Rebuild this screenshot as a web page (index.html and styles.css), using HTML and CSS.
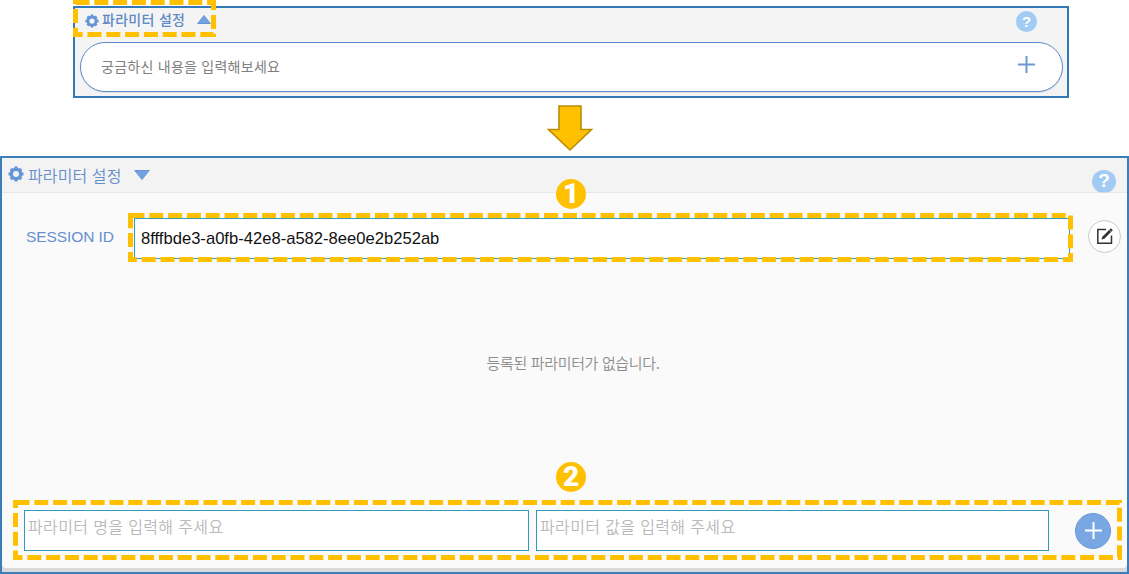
FILE: index.html
```html
<!DOCTYPE html>
<html lang="ko">
<head>
<meta charset="utf-8">
<title>파라미터 설정</title>
<link rel="stylesheet" href="styles.css">
</head>
<body>
<main class="page">
  <section class="compact">
    <header class="compact-head">
      <svg class="gear gear-small" viewBox="-8 -8 16 16"><circle r="4.6"/><path d="M0-7.5V-4M0 7.5V4M-7.5 0H-4M7.5 0H4M-5.2-5.2L-3-3M5.2 5.2L3 3M-5.2 5.2L-3 3M5.2-5.2L3-3"/></svg>
      <span class="compact-title">파라미터 설정</span>
      <svg class="triangle-up" viewBox="0 0 14 9"><path d="M7 .5L13.3 8.5H.7Z"/></svg>
      <span class="help help-small">?</span>
    </header>
    <div class="prompt">
      <span class="prompt-text">궁금하신 내용을 입력해보세요</span>
      <svg class="prompt-plus" viewBox="0 0 17 17"><path d="M8.5 0V17M0 8.5H17"/></svg>
    </div>
  </section>

  <svg class="arrow" viewBox="0 0 48 48"><path d="M13 2H35V25.500H45.500L24 46L2.500 25.500H13Z"/></svg>

  <section class="panel">
    <header class="panel-head">
      <svg class="gear" viewBox="-8 -8 16 16"><circle r="4.600"/><path d="M0-7.5V-4M0 7.5V4M-7.5 0H-4M7.5 0H4M-5.2-5.2L-3-3M5.2 5.2L3 3M-5.2 5.2L-3 3M5.2-5.2L3-3"/></svg>
      <span class="panel-title">파라미터 설정</span>
      <svg class="triangle-down" viewBox="0 0 16 10"><path d="M.8.5H15.200L8 9.500Z"/></svg>
      <span class="help">?</span>
    </header>
    <div class="panel-body">
      <div class="session">
        <span class="session-label">SESSION ID</span>
        <div class="session-value"><span class="session-text">8fffbde3-a0fb-42e8-a582-8ee0e2b252ab</span></div>
        <span class="edit"><svg viewBox="0 0 18 18"><path class="edit-box" d="M10 2.500H1.800V16.200H15.500V8.500"/><path class="edit-pen" d="M5.500 12.500L6.300 9.700L14.800 1.200L16.800 3.200L8.300 11.700Z"/><path class="edit-cut" d="M13 2.500L15.500 5"/></svg></span>
      </div>
      <div class="empty"><span class="empty-text">등록된 파라미터가 없습니다.</span></div>
      <div class="entry">
        <div class="field field-name"><span class="field-text">파라미터 명을 입력해 주세요</span></div>
        <div class="field field-value"><span class="field-text">파라미터 값을 입력해 주세요</span></div>
        <span class="add"><svg viewBox="0 0 17 17"><path d="M8.500 0V17M0 8.500H17"/></svg></span>
      </div>
    </div>
  </section>

  <svg class="callouts" viewBox="0 0 1129 574">
    <rect x="75.5" y="2.5" width="138" height="32"/>
    <rect x="130.5" y="215.5" width="940" height="44"/>
    <rect x="15.5" y="502.5" width="1104" height="55"/>
  </svg>
  <span class="marker marker-one">1</span>
  <span class="marker marker-two">2</span>
</main>
</body>
</html>
```

FILE: styles.css
```css
* { box-sizing: border-box; }
body { margin: 0; background: #fff; font-family: "Liberation Sans", "Noto Sans CJK KR", sans-serif; }
svg { display: block; flex: none; }
span { white-space: nowrap; }
.page { position: relative; width: 1129px; height: 574px; padding-top: 6px; overflow: hidden; display: flex; flex-direction: column; }

.compact { width: 996px; height: 92px; margin-left: 73px; border: 2px solid #3479b7; background: #f4f4f4; padding: 0 4px 0 5px; }
.compact-head { display: flex; align-items: center; height: 34px; padding: 0 25px 8px 4px; }
.gear { width: 16px; height: 16px; fill: none; stroke: #6495d6; stroke-width: 3.2; }
.gear-small { width: 14px; height: 14px; margin: -1px 0 0 1px; }
.compact-title { width: 84px; margin: -4px 0 0 3px; font: 500 14px/20px "Noto Sans CJK KR", sans-serif; letter-spacing: .3px; color: #6089c6; }
.triangle-up { width: 14px; height: 9px; margin: -3px 0 0 11px; fill: #75a3e2; stroke: #6495d6; stroke-width: 1; }
.help { display: flex; align-items: center; justify-content: center; margin-left: auto; width: 24px; height: 24px; border-radius: 50%; background: #a1cbf3; color: #fff; font: bold 19px/24px "Liberation Sans", sans-serif; }
.help-small { width: 21px; height: 21px; margin-right: 1px; font-size: 15px; line-height: 21px; }
.prompt { display: flex; align-items: center; justify-content: space-between; height: 50px; border: 1.5px solid #5a8cc9; border-radius: 25px; background: #fff; padding: 0 27px 0 20px; box-shadow: 0 1px 1px #ddd; }
.prompt-text { margin-top: -2px; font: 400 14px/20px "Noto Sans CJK KR", sans-serif; color: #808080; letter-spacing: .26px; }
.prompt-plus { width: 17px; height: 17px; margin-top: -6px; stroke: #6c9ad3; stroke-width: 2; }

.arrow { width: 48px; height: 48px; margin: 6px 0 0 546px; fill: #ffc000; stroke: #bc8c00; stroke-width: 1.6; }

.panel { width: 1129px; height: 418px; margin-top: 4px; border: 2px solid #3b7eb9; background: #d9d9d9; padding-bottom: 4px; }
.panel-head { display: flex; align-items: center; height: 35px; background: #f3f3f3; border-bottom: 1px solid #e8e8e8; padding: 0 11px 0 6px; }
.panel-head .gear { margin-top: -2px; }
.panel-title { width: 95px; margin-left: 4px; font: 350 16px/22px "Noto Sans CJK KR", sans-serif; color: #658fcb; letter-spacing: .1px; }
.triangle-down { width: 16px; height: 10px; margin-left: 11px; fill: #75a3e2; stroke: #6495d6; stroke-width: 1; }
.panel-head .help { margin-top: 12px; height: 23px; clip-path: inset(0 0 0 0); }
.panel-body { display: flex; flex-direction: column; height: 375px; background: #fafafa; border-radius: 0 0 4px 4px; padding: 25px 0 0 1px; }
.session { display: flex; align-items: center; height: 41px; }
.session-label { width: 108px; padding-left: 23px; font-size: 15.5px; letter-spacing: -.08px; color: #678fd0; margin-top: -4px; }
.session-value { display: flex; align-items: center; width: 936px; height: 41px; margin-left: 23px; border: 1px solid #389abc; background: #fff; padding-left: 6px; }
.session-text { font-size: 16.6px; color: #111; }
.edit { display: flex; align-items: center; justify-content: center; width: 33px; height: 33px; margin: -5px 0 0 18px; border: 1px solid #c9c9c9; border-radius: 50%; background: #fff; }
.edit svg { width: 18px; height: 18px; }
.edit-box { fill: none; stroke: #333; stroke-width: 1.5; }
.edit-pen { fill: #333; }
.edit-cut { stroke: #fff; stroke-width: .5; }
.empty { display: flex; align-items: center; justify-content: center; height: 210px; padding: 0 0 2px 16px; }
.empty-text { font: 350 15px/22px "Noto Sans CJK KR", sans-serif; color: #8d8d8d; letter-spacing: -.35px; }
.entry { display: flex; align-items: center; gap: 8px; height: 41px; margin-top: 41px; padding-left: 21px; }
.field { width: 505px; height: 41px; border: 1px solid #329bbb; background: #fff; padding: 4px 3px; }
.field-value { width: 513px; margin-left: -1px; }
.field-text { display: block; font: 350 16px/22px "Noto Sans CJK KR", sans-serif; color: #b9b9b9; letter-spacing: .36px; }
.add { display: flex; align-items: center; justify-content: center; width: 36px; height: 36px; margin-left: 18px; border: 1px solid #6a97d3; border-radius: 50%; background: #79a7e3; }
.add svg { width: 17px; height: 17px; stroke: #fff; stroke-width: 2; }

/* Annotations drawn over the panels */
.callouts { position: absolute; left: 0; top: 0; width: 1129px; height: 574px; fill: none; stroke: #ffc000; stroke-width: 5; stroke-dasharray: 14 4.8; }
.marker { position: absolute; left: 556px; display: flex; align-items: center; justify-content: center; width: 30px; height: 30px; border-radius: 50%; background: #ffc000; color: #fff; font: 900 28px/30px Roboto, sans-serif; }
.marker-one { top: 179px; }
.marker-two { top: 462px; }
```
